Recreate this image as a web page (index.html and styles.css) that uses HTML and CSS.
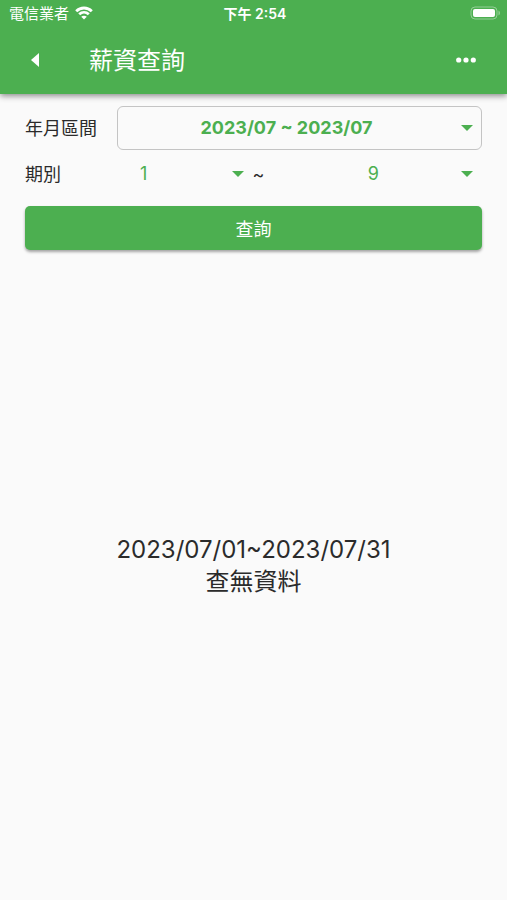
FILE: index.html
```html
<!DOCTYPE html>
<html lang="zh-Hant">
<head>
<meta charset="utf-8">
<meta name="viewport" content="width=device-width, initial-scale=1">
<title>薪資查詢</title>
<link rel="stylesheet" href="styles.css">
</head>
<body>
<header class="top">
  <div class="status">
    <div class="carrier">
      <span>電信業者</span>
      <svg class="wifi" viewBox="0 0 18 14" aria-hidden="true">
        <path class="arc" d="M1.2 5.2C5.600 .9 12.400 .9 16.800 5.200M4.200 8.300C7 5.700 11 5.700 13.800 8.300"/>
        <path class="fill" d="M9 13.500L6.200 10.700C7.800 9.300 10.200 9.300 11.800 10.700Z"/>
      </svg>
    </div>
    <time class="clock">下午 2:54</time>
    <svg class="battery" viewBox="0 0 31 14" aria-hidden="true">
      <rect class="shell" x="1" y="1" width="26" height="12" rx="4"/>
      <rect class="fill" x="3" y="3" width="22" height="8" rx="2"/>
      <path class="tip" d="M28.500 4.500C30.500 5.500 30.500 8.500 28.500 9.500Z"/>
    </svg>
  </div>
  <div class="bar">
    <button class="icon-button" type="button" aria-label="返回">
      <svg class="back" viewBox="0 0 8 14" aria-hidden="true"><path class="fill" d="M8 0V14L0 7Z"/></svg>
    </button>
    <h1 class="title">薪資查詢</h1>
    <button class="icon-button" type="button" aria-label="更多">
      <svg class="more" viewBox="0 0 20 6" aria-hidden="true"><circle class="fill" cx="2.700" cy="3" r="2.600"/><circle class="fill" cx="10" cy="3" r="2.600"/><circle class="fill" cx="17.300" cy="3" r="2.600"/></svg>
    </button>
  </div>
</header>
<main class="content">
  <form class="form">
    <div class="row">
      <label class="label" for="range">年月區間</label>
      <div class="picker">
        <select id="range" class="select select-range"><option>2023/07 ~ 2023/07</option></select>
        <svg class="caret" viewBox="0 0 12 6" aria-hidden="true"><path d="M0 0H12L6 6Z"/></svg>
      </div>
    </div>
    <div class="row row-period">
      <label class="label" for="from">期別</label>
      <div class="picker">
        <select id="from" class="select"><option>1</option></select>
        <svg class="caret" viewBox="0 0 12 6" aria-hidden="true"><path d="M0 0H12L6 6Z"/></svg>
      </div>
      <span class="tilde">~</span>
      <div class="picker">
        <select id="to" class="select" aria-label="期別迄"><option>9</option></select>
        <svg class="caret" viewBox="0 0 12 6" aria-hidden="true"><path d="M0 0H12L6 6Z"/></svg>
      </div>
    </div>
    <button class="submit" type="button">查詢</button>
  </form>
  <section class="empty">
    <p>2023/07/01~2023/07/31</p>
    <p>查無資料</p>
  </section>
</main>
</body>
</html>
```
FILE: styles.css
```css
* {
  box-sizing: border-box;
}

body {
  margin: 0;
  min-height: 100vh;
  display: flex;
  flex-direction: column;
  background: #fafafa;
  color: #2b2b2b;
  font-family: Inter, "Noto Sans CJK TC", sans-serif;
  font-size: 18px;
}

button,
select {
  font: inherit;
}

svg {
  display: block;
}

.fill {
  fill: #fff;
}

.top {
  background: #4caf50;
  color: #fff;
  box-shadow: 0 2px 6px rgba(0, 0, 0, 0.45);
}

.status {
  display: grid;
  grid-template-columns: 1fr auto 1fr;
  align-items: center;
  height: 28px;
  padding: 0 6px 0 9px;
  font-size: 15px;
  line-height: 28px;
}

.carrier {
  display: flex;
  align-items: center;
  gap: 6px;
}

.wifi {
  width: 18px;
  height: 14px;
  margin-bottom: 2px;
}

.arc {
  fill: none;
  stroke: #fff;
  stroke-width: 2.8;
}

.clock {
  font-size: 14px;
  font-weight: 600;
}

.battery {
  width: 31px;
  height: 14px;
  margin-bottom: 2px;
  justify-self: end;
}

.shell {
  fill: none;
  stroke: rgba(255, 255, 255, 0.4);
}

.tip {
  fill: rgba(255, 255, 255, 0.4);
}

.bar {
  display: flex;
  align-items: center;
  height: 66px;
  padding: 0 17px 2px;
}

.icon-button {
  display: flex;
  align-items: center;
  justify-content: center;
  width: 48px;
  height: 48px;
  padding: 0 12px 0 0;
  border: 0;
  background: none;
}

.icon-button:last-child {
  padding: 0;
}

.back {
  width: 8px;
  height: 14px;
}

.more {
  width: 20px;
  height: 6px;
}

.title {
  flex: 1;
  margin: 0;
  padding: 2px 0 0 24px;
  font-size: 24px;
  font-weight: 400;
  line-height: 32px;
}

.content {
  flex: 1;
  display: flex;
  flex-direction: column;
  padding: 12px 25px 0;
}

.form {
  display: flex;
  flex-direction: column;
}

.row {
  display: flex;
  align-items: center;
  gap: 20px;
}

.row-period {
  gap: 0;
}

.label {
  padding-top: 2px;
  line-height: 28px;
}

.picker {
  position: relative;
  flex: 1;
}

.select {
  display: block;
  width: 100%;
  height: 48px;
  padding: 0 26px 2px 0;
  border: 0;
  appearance: none;
  background: none;
  color: #4caf50;
  text-align: center;
  text-align-last: center;
}

.select-range {
  height: 44px;
  border: 1px solid #c4c4c4;
  border-radius: 6px;
  font-weight: 700;
}

.caret {
  position: absolute;
  top: 50%;
  right: 9px;
  width: 12px;
  height: 6px;
  margin-top: -3px;
  fill: #4caf50;
  pointer-events: none;
}

.tilde {
  width: 38px;
}

.submit {
  height: 44px;
  margin-top: 8px;
  border: 0;
  border-radius: 5px;
  background: #4caf50;
  color: #fff;
  box-shadow: 0 2px 3px rgba(0, 0, 0, 0.35);
}

.empty {
  flex: 1;
  display: flex;
  flex-direction: column;
  align-items: center;
  justify-content: center;
  padding: 0 0 18px;
  font-size: 24px;
  line-height: 32px;
}

.empty p {
  margin: 0;
}
```
